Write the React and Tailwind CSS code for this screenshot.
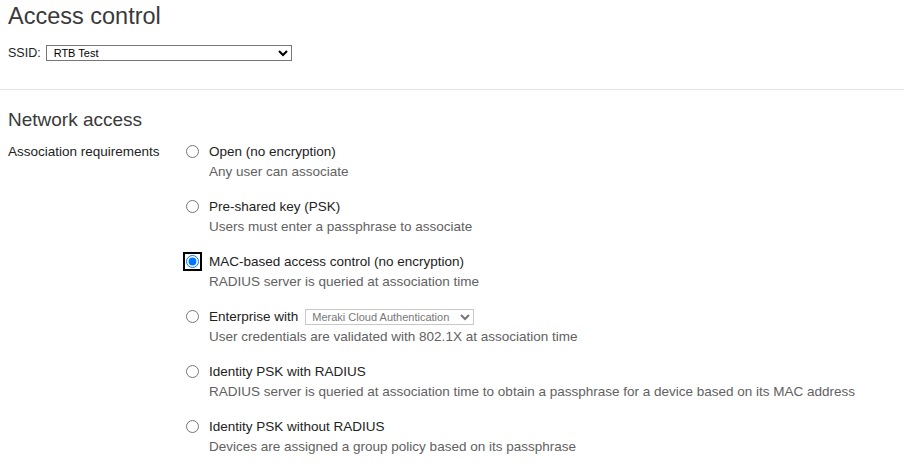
import React from "react";

const OPTIONS = [
  { label: "Open (no encryption)", desc: "Any user can associate" },
  { label: "Pre-shared key (PSK)", desc: "Users must enter a passphrase to associate" },
  {
    label: "MAC-based access control (no encryption)",
    desc: "RADIUS server is queried at association time",
    checked: true,
  },
  {
    label: "Enterprise with",
    desc: "User credentials are validated with 802.1X at association time",
    select: true,
  },
  {
    label: "Identity PSK with RADIUS",
    desc: "RADIUS server is queried at association time to obtain a passphrase for a device based on its MAC address",
  },
  { label: "Identity PSK without RADIUS", desc: "Devices are assigned a group policy based on its passphrase" },
];

function Option({ opt }) {
  return (
    <div className="flex items-start mb-[15px]">
      <div className="w-[24px] pt-[3px] pl-[1px] flex">
        <input
          type="radio"
          name="assoc"
          defaultChecked={opt.checked}
          className={
            "block m-0 w-[13px] h-[13px] " +
            (opt.checked ? "outline-2 outline-offset-[1px] outline-black rounded-[4px]" : "")
          }
        />
      </div>
      <div className="flex flex-col">
        <div className="flex items-center h-[20px] text-[13.5px] text-[#222]">
          {opt.label}
          {opt.select && (
            <select
              defaultValue="meraki"
              className="ml-[7px] h-[16px] w-[169px] border border-[#c8c8c8] text-[11px] text-[#777] px-[2px]"
            >
              <option value="meraki">Meraki Cloud Authentication</option>
            </select>
          )}
        </div>
        <div className="h-[20px] leading-[20px] text-[13.5px] text-[#616161]">{opt.desc}</div>
      </div>
    </div>
  );
}

export default function App() {
  return (
    <div className="min-h-screen bg-white font-['Liberation_Sans',Arial,sans-serif] text-[#222]">
      {/* header */}
      <div className="px-[8px] pt-[2px]">
        <h1 className="text-[23.5px] leading-[28px] font-light text-[#3a3a3a]">Access control</h1>
        <div className="flex items-center mt-[14px] text-[12.5px]">
          <span>SSID:</span>
          <select
            defaultValue="rtb"
            className="ml-[5px] h-[16px] w-[246px] border border-[#767676] text-[11px] text-black px-[3px]"
          >
            <option value="rtb">RTB Test</option>
          </select>
        </div>
      </div>

      <div className="mt-[26px] border-t border-[#e3e3e3]" />

      {/* network access */}
      <div className="px-[8px] pt-[18px]">
        <h2 className="text-[19px] leading-[24px] font-light text-[#3a3a3a]">Network access</h2>
        <div className="flex mt-[10px]">
          <div className="w-[177px] text-[13.5px] h-[20px] leading-[20px]">Association requirements</div>
          <div className="flex flex-col">
            {OPTIONS.map((o) => (
              <Option key={o.label} opt={o} />
            ))}
          </div>
        </div>
      </div>
    </div>
  );
}
